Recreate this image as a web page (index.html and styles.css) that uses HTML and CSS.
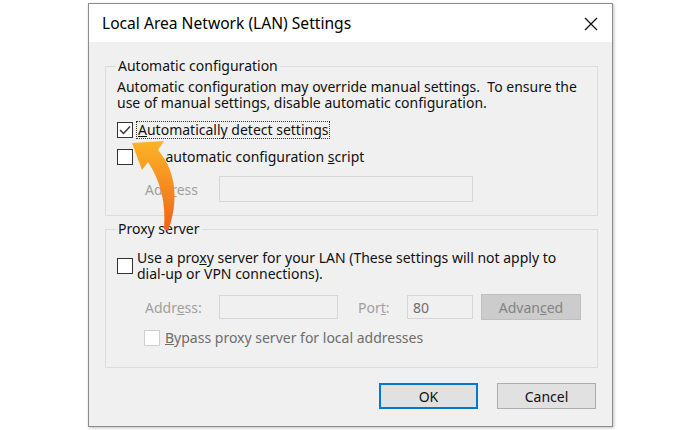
FILE: index.html
```html
<!DOCTYPE html>
<html>
<head>
<meta charset="utf-8">
<link rel="stylesheet" href="styles.css">
</head>
<body>
<div class="dialog">
  <div class="titlebar">
    <span class="title">Local Area Network (LAN) Settings</span>
    <svg class="close" width="14" height="14" viewBox="0 0 14 14"><path d="M1 1 L13 13 M13 1 L1 13" stroke="#111" stroke-width="1.3" fill="none"/></svg>
  </div>
  <div class="body">
    <fieldset class="group g1">
      <legend>Automatic configuration</legend>
      <p class="desc">Automatic configuration may override manual settings.&nbsp; To ensure the<br>use of manual settings, disable automatic configuration.</p>
      <div class="row cb-row r1">
        <span class="cb"><svg width="12" height="10" viewBox="0 0 12 10"><path d="M1 5 L4.5 8.5 L11 1.5" stroke="#333" stroke-width="1.4" fill="none"/></svg></span>
        <span class="label focus"><u>A</u>utomatically detect settings</span>
      </div>
      <div class="row cb-row r2">
        <span class="cb"></span>
        <span class="label">Use automatic configuration <u>s</u>cript</span>
      </div>
      <div class="row field-row r3">
        <span class="flabel">Add<u>r</u>ess</span>
        <span class="input wide"></span>
      </div>
    </fieldset>
    <fieldset class="group g2">
      <legend>Proxy server</legend>
      <div class="row cb-row r4">
        <span class="cb"></span>
        <span class="label two">Use a pro<u>x</u>y server for your LAN (These settings will not apply to<br>dial-up or VPN connections).</span>
      </div>
      <div class="row field-row r5">
        <span class="flabel">Addr<u>e</u>ss:</span>
        <span class="input addr"></span>
        <span class="flabel port">Por<u>t</u>:</span>
        <span class="input portin">80</span>
        <span class="btn-adv">Advan<u>c</u>ed</span>
      </div>
      <div class="row cb-row r6">
        <span class="cb dis"></span>
        <span class="label dim"><u>B</u>ypass proxy server for local addresses</span>
      </div>
    </fieldset>
    <div class="buttons">
      <span class="btn ok">OK</span>
      <span class="btn">Cancel</span>
    </div>
  </div>
  <svg class="arrow" width="50" height="105" viewBox="0 0 50 105">
    <defs>
      <linearGradient id="ag" x1="0" y1="0" x2="0" y2="1">
        <stop offset="0" stop-color="#fbb426"/>
        <stop offset="0.45" stop-color="#f79020"/>
        <stop offset="1" stop-color="#ee6219"/>
      </linearGradient>
    </defs>
    <path d="M2 8 L34 6 L28 15 C48 38 48 70 38 96 L34 94 C36 68 31 47 18 27 L12 35 Z" fill="url(#ag)"/>
  </svg>
</div>
</body>
</html>
```
FILE: styles.css
```css
* { box-sizing: border-box; }
body {
  margin: 0;
  background: #fff;
  width: 700px;
  height: 430px;
  overflow: hidden;
  font-family: "Noto Sans", "Open Sans", sans-serif;
  font-size: 14px;
  color: #111;
}
.dialog {
  position: relative;
  margin: 3px 0 0 88px;
  width: 525px;
  height: 424px;
  border: 1px solid #8c8c8c;
  box-shadow: 1px 1px 3px rgba(0,0,0,0.25);
  background: #f0f0f0;
  display: flex;
  flex-direction: column;
}
.titlebar {
  height: 38px;
  background: #fff;
  display: flex;
  align-items: center;
  justify-content: space-between;
  padding: 0 14px 0 13px;
}
.title { font-size: 15.6px; color: #000; }
.close { margin-top: 1px; }
.body {
  flex: 1;
  padding: 16px 14px 0 16px;
  display: flex;
  flex-direction: column;
}
.group {
  margin: 0;
  border: 1px solid #dcdcdc;
  padding: 0 10px 0 11px;
}
.group legend {
  padding: 0 2px;
  margin-left: -1px;
  line-height: 16px;
  color: #111;
}
.g1 { height: 158px; }
.g2 { height: 147px; margin-top: 5px; }
.desc {
  margin: 5px 0 0 0;
  line-height: 16px;
}
.row { display: flex; align-items: center; }
.cb {
  width: 16px;
  height: 16px;
  border: 1px solid #333;
  background: #fff;
  display: flex;
  align-items: center;
  justify-content: center;
  flex: none;
}
.cb.dis { border-color: #cfcfcf; margin-left: 27px; }
.label { margin-left: 4px; line-height: 16px; }
.label.focus { outline: 1px dotted #333; outline-offset: 0; padding: 0 1px; }
.label.dim { color: #6d6d6d; margin-left: 5px; }
.label.two { align-self: flex-start; }
.r1 { margin-top: 11px; }
.r2 { margin-top: 11px; }
.r3 { margin-top: 11px; }
.field-row .flabel {
  color: #a0a0a0;
  width: 102px;
  padding-left: 28px;
  flex: none;
}
.input {
  height: 26px;
  border: 1px solid #d6d6d6;
  background: #f0f0f0;
  color: #6d6d6d;
  display: flex;
  align-items: center;
  padding-left: 5px;
  flex: none;
}
.input.wide { width: 254px; }
.r4 { margin-top: 13px; align-items: flex-start; }
.r4 .cb { margin-top: 8px; }
.r5 { margin-top: 12px; }
.input.addr { width: 119px; height: 24px; }
.field-row .flabel.port { padding-left: 20px; width: 69px; }
.input.portin { width: 66px; height: 24px; }
.btn-adv {
  margin-left: 8px;
  width: 100px;
  height: 26px;
  background: #cccccc;
  border: 1px solid #bfbfbf;
  color: #838383;
  display: flex;
  align-items: center;
  justify-content: center;
  flex: none;
}
.r6 { margin-top: 10px; }
.buttons {
  display: flex;
  justify-content: flex-end;
  gap: 19px;
  margin-top: 15px;
  margin-right: 2px;
}
.btn {
  width: 99px;
  height: 26px;
  background: #e1e1e1;
  border: 1px solid #adadad;
  display: flex;
  align-items: center;
  justify-content: center;
  color: #111;
}
.btn.ok { border: 2px solid #0078d7; }
.arrow {
  position: absolute;
  left: 41px;
  top: 131px;
  overflow: visible;
}
```
